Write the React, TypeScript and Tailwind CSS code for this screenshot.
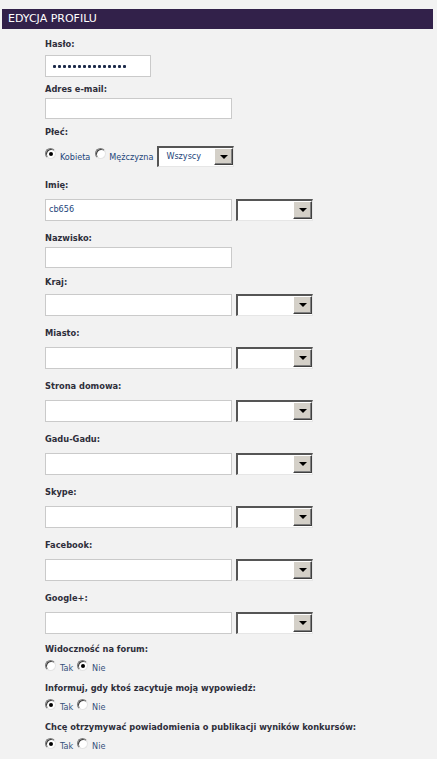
import React from "react";

function Radio({ checked, className = "" }: { checked?: boolean; className?: string }) {
  return (
    <span
      className={`flex h-[11px] w-[11px] shrink-0 items-center justify-center rounded-full border border-t-[#7c7c7c] border-l-[#7c7c7c] border-b-[#e4e4e4] border-r-[#e4e4e4] bg-white shadow-[inset_1px_1px_0_#404040] ${className}`}
    >
      {checked && <span className="h-[4px] w-[4px] rounded-full bg-black" />}
    </span>
  );
}

function Select({ value, h = "h-[22px]" }: { value?: string; h?: string }) {
  return (
    <div
      className={`flex w-[77px] ${h} shrink-0 border-t-2 border-l-2 border-b border-r border-t-[#555] border-l-[#555] border-b-[#e6e6e6] border-r-[#e6e6e6] bg-white`}
    >
      <div className="flex flex-1 items-center pl-[7px] text-[9px] text-[#23457a]">{value}</div>
      <div className="mb-[1px] flex w-[19px] items-center justify-center border border-t-white border-l-white border-b-[#404040] border-r-[#404040] bg-[#d4d0c8] shadow-[inset_-1px_-1px_0_#808080]">
        <span className="h-0 w-0 border-l-[4px] border-r-[4px] border-t-[4px] border-l-transparent border-r-transparent border-t-black" />
      </div>
    </div>
  );
}

function Input({ w = "w-[187px]", h = "h-[22px]", children }: { w?: string; h?: string; children?: React.ReactNode }) {
  return (
    <div className={`flex ${w} ${h} shrink-0 items-center border border-[#cacaca] bg-white pl-[3px] text-[9px] text-[#23457a]`}>
      {children}
    </div>
  );
}

function Label({ children, mt }: { children: React.ReactNode; mt: string }) {
  return <div className={`${mt} h-[12px] text-[9.2px] font-bold leading-[12px] text-[#2e2e3a]`}>{children}</div>;
}

function SelectGroup({ label, value }: { label: string; value?: string }) {
  return (
    <>
      <Label mt="mt-[11px]">{label}</Label>
      <div className="mt-[8px] flex h-[22px] gap-[4px]">
        <Input>{value}</Input>
        <Select />
      </div>
    </>
  );
}

function YesNo({ yes }: { yes: boolean }) {
  return (
    <div className="mt-[5px] flex h-[11px] items-start">
      <Radio checked={yes} />
      <span className="ml-[4px] mt-[3px] text-[9px] leading-[10px] text-[#34507a]">Tak</span>
      <Radio checked={!yes} className="ml-[4px]" />
      <span className="ml-[4px] mt-[3px] text-[9px] leading-[10px] text-[#34507a]">Nie</span>
    </div>
  );
}

export default function App() {
  const dots = Array.from({ length: 15 });
  return (
    <div className="min-h-[759px] w-[437px] bg-[#f2f2f2] pt-[9px] font-['DejaVu_Sans_Condensed','DejaVu_Sans',sans-serif]">
      <div className="ml-[2px] flex h-[20px] w-[431px] items-center bg-[#32214a] pl-[6px] font-['DejaVu_Sans',sans-serif] text-[11px] text-white">
        EDYCJA PROFILU
      </div>
      <div className="pl-[45px]">
        <Label mt="mt-[9px]">Hasło:</Label>
        <div className="mt-[5px]">
          <Input w="w-[106px]" h="h-[22px]">
            <span className="ml-[4px] flex gap-[2px]">
              {dots.map((_, i) => (
                <span key={i} className="h-[3px] w-[3px] rounded-[1px] bg-[#1c2a4a]" />
              ))}
            </span>
          </Input>
        </div>
        <Label mt="mt-[6px]">Adres e-mail:</Label>
        <div className="mt-[3px]">
          <Input h="h-[21px]" />
        </div>
        <Label mt="mt-[7px]">Płeć:</Label>
        <div className="mt-[8px] flex h-[21px] items-start">
          <Radio checked className="mt-[2px]" />
          <span className="ml-[4px] mt-[6px] text-[9px] leading-[10px] text-[#23457a]">Kobieta</span>
          <Radio className="ml-[5px] mt-[2px]" />
          <span className="ml-[3px] mt-[6px] text-[9px] leading-[10px] text-[#23457a]">Mężczyzna</span>
          <span className="ml-[4px] flex">
            <Select value="Wszyscy" h="h-[21px]" />
          </span>
        </div>
        <Label mt="mt-[12px]">Imię:</Label>
        <div className="mt-[8px] flex h-[22px] gap-[4px]">
          <Input>cb656</Input>
          <Select />
        </div>
        <Label mt="mt-[11px]">Nazwisko:</Label>
        <div className="mt-[3px]">
          <Input h="h-[21px]" />
        </div>
        <Label mt="mt-[8px]">Kraj:</Label>
        <div className="mt-[6px] flex h-[22px] gap-[4px]">
          <Input />
          <Select />
        </div>
        <SelectGroup label="Miasto:" />
        <SelectGroup label="Strona domowa:" />
        <SelectGroup label="Gadu-Gadu:" />
        <SelectGroup label="Skype:" />
        <SelectGroup label="Facebook:" />
        <SelectGroup label="Google+:" />
        <Label mt="mt-[9px]">Widoczność na forum:</Label>
        <YesNo yes={false} />
        <Label mt="mt-[11px]">Informuj, gdy ktoś zacytuje moją wypowiedź:</Label>
        <YesNo yes={true} />
        <Label mt="mt-[11px]">Chcę otrzymywać powiadomienia o publikacji wyników konkursów:</Label>
        <YesNo yes={true} />
      </div>
    </div>
  );
}
